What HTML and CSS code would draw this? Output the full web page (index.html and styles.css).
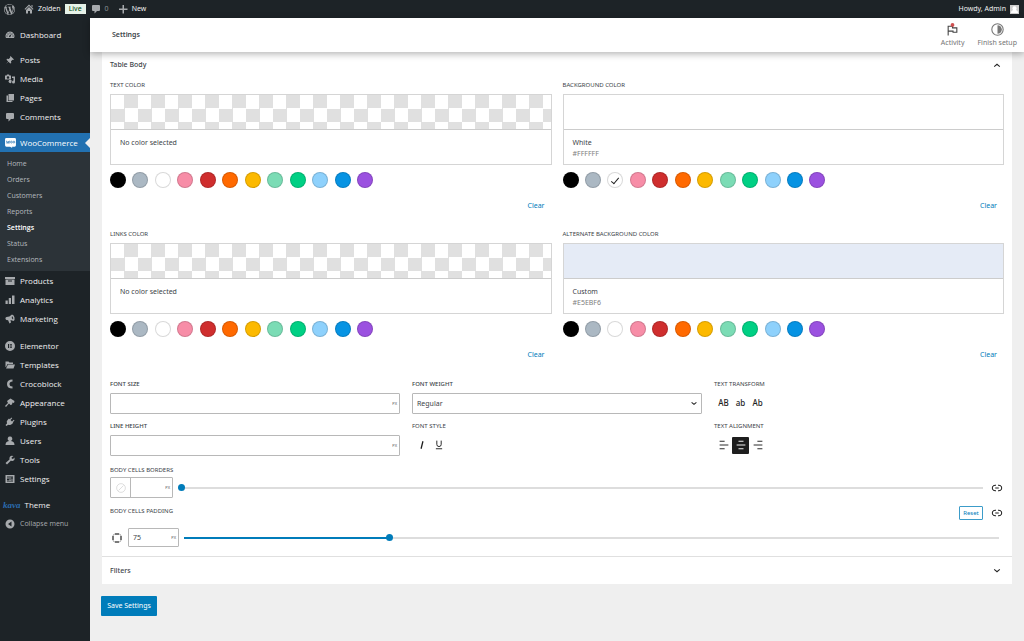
FILE: index.html
```html
<!DOCTYPE html>
<html lang="en">
<head>
<meta charset="utf-8">
<meta name="viewport" content="width=device-width, initial-scale=1">
<title>Settings</title>
<link rel="stylesheet" href="styles.css">
</head>
<body>
<header class="adminbar">
  <a class="bar-link wp-logo" href="#" aria-label="WordPress"><svg class="icon-lg" viewBox="0 0 20 20"><path fill-rule="evenodd" d="M20 10c0-5.510-4.490-10-10-10C4.480 0 0 4.490 0 10c0 5.520 4.480 10 10 10 5.510 0 10-4.480 10-10zM7.780 15.370L4.370 6.220c.55-.02 1.170-.08 1.170-.08.5-.06.44-1.130-.06-1.110 0 0-1.450.11-2.370.11-.18 0-.37 0-.58-.01C4.120 2.690 6.870 1.110 10 1.110c2.330 0 4.450.87 6.050 2.340-.68-.11-1.650.39-1.650 1.580 0 .74.45 1.360.9 2.100.35.61.55 1.360.55 2.460 0 1.490-1.400 5-1.400 5l-3.030-8.370c.54-.02.82-.17.82-.17.5-.05.44-1.250-.06-1.220 0 0-1.440.12-2.380.12-.87 0-2.330-.12-2.330-.12-.5-.03-.56 1.200-.06 1.220l.92.08 1.260 3.410zM17.410 10c.24-.64.74-1.870.43-4.250.7 1.290 1.050 2.710 1.050 4.250 0 3.290-1.730 6.240-4.400 7.780.97-2.590 1.940-5.200 2.920-7.780zM6.100 18.090C3.120 16.650 1.110 13.530 1.110 10c0-1.300.23-2.480.72-3.590C3.250 10.300 4.670 14.200 6.100 18.090zm4.030-6.630l2.580 6.980c-.86.29-1.760.45-2.710.45-.79 0-1.570-.11-2.290-.33.81-2.380 1.620-4.740 2.420-7.100z"/></svg></a>
  <a class="bar-link" href="#"><svg class="icon" viewBox="0 0 20 20"><path d="M10 1l9 9-1.500 1.500L10 4l-7.500 7.500L1 10zM15 2h2v5l-2-2zM10 6l6 6v7h-4v-5H8v5H4v-7z"/></svg><span>Zolden</span></a>
  <span class="live">Live</span>
  <a class="bar-link bar-comments" href="#"><svg class="icon" viewBox="0 0 20 20"><path d="M4 2h12q2 0 2 2v8q0 2-2 2h-4l-5 5v-5H4q-2 0-2-2V4q0-2 2-2z"/></svg><span class="dim">0</span></a>
  <a class="bar-link bar-new" href="#"><svg class="icon" viewBox="0 0 20 20"><path d="M9 2h3v7h7v3h-7v7H9v-7H2V9h7z"/></svg><span>New</span></a>
  <a class="bar-link account" href="#"><span>Howdy, Admin</span><svg class="avatar" viewBox="0 0 20 20"><path fill="#ccc" d="M0 0h20v20H0z"/><path fill="#fff" d="M10 3a4.500 4.500 0 0 1 3 8q5 1 5 7H2q0-6 5-7a4.500 4.500 0 0 1 3-8z"/></svg></a>
</header>
<div class="shell">
  <nav class="sidebar">
    <a class="item" href="#"><svg class="icon" viewBox="0 0 20 20"><path fill-rule="evenodd" d="M10 3a9 9 0 0 0-8 13h16A9 9 0 0 0 10 3zM9 5h2v2H9zM5 7h2v2H5zm8 0h2v2h-2zM3 11h2v2H3zm12 0h2v2h-2zm-6 0l4-3-2 5q0 2-2 1t0-3z"/></svg>Dashboard</a>
    <a class="item gap-sm" href="#"><svg class="icon" viewBox="0 0 20 20"><path d="M11 2l7 7-2 1-1-.5-3 3 .5 3.500-2 1-3.500-3.500L2 18l4.500-5L3 9.500l1-2 3.500.5 3-3-.5-1z"/></svg>Posts</a>
    <a class="item" href="#"><svg class="icon" viewBox="0 0 20 20"><path fill-rule="evenodd" d="M0 3h3l1-2h4l1 2h3v8H0zm6 1.500a2.500 2.500 0 1 0 0 5 2.500 2.500 0 0 0 0-5zM14 5h6v11a3 3 0 1 1-3-3V8h-3zM8 12h5v4a3 3 0 1 1-5-3z"/></svg>Media</a>
    <a class="item" href="#"><svg class="icon" viewBox="0 0 20 20"><path d="M7 2h11v13H7zM3 5h3v11h9v2H3z"/></svg>Pages</a>
    <a class="item" href="#"><svg class="icon" viewBox="0 0 20 20"><path d="M4 2h12q2 0 2 2v8q0 2-2 2h-4l-5 5v-5H4q-2 0-2-2V4q0-2 2-2z"/></svg>Comments</a>
    <a class="item active gap-md" href="#"><svg class="icon woo" viewBox="0 0 24 22"><path fill="#fff" d="M3 0h18q3 0 3 3v13q0 3-3 3h-6l1 3-5-3H3q-3 0-3-3V3q0-3 3-3z"/><path fill="none" stroke="#2271b1" stroke-width="1.500" d="M3 6l1.500 6L7 7l1.500 5L10 6"/><circle cx="14" cy="9" r="2" fill="none" stroke="#2271b1" stroke-width="1.500"/><circle cx="19.500" cy="9" r="2" fill="none" stroke="#2271b1" stroke-width="1.500"/></svg>WooCommerce</a>
    <div class="submenu">
      <a href="#">Home</a><a href="#">Orders</a><a href="#">Customers</a><a href="#">Reports</a><a class="current" href="#">Settings</a><a href="#">Status</a><a href="#">Extensions</a>
    </div>
    <a class="item" href="#"><svg class="icon" viewBox="0 0 20 20"><path fill-rule="evenodd" d="M0 2h20v4H0zm1 5h18v11H1zm5 2v2h8V9z"/></svg>Products</a>
    <a class="item" href="#"><svg class="icon" viewBox="0 0 20 20"><path d="M14 1h5v17h-5zM7.500 6h4.500v12H7.500zM1 11h4.500v7H1z"/></svg>Analytics</a>
    <a class="item" href="#"><svg class="icon" viewBox="0 0 20 20"><path fill-rule="evenodd" d="M14 1q4 1 5 6t-2 7l-6-2 1 5-3 2-3-7q-4 1-5-2t2-4q6 0 11-5zm0 3q-2 4 2 7 2-3-2-7z"/></svg>Marketing</a>
    <a class="item gap-lg" href="#"><svg class="icon" viewBox="0 0 20 20"><path fill-rule="evenodd" d="M10 0a10 10 0 1 1 0 20 10 10 0 0 1 0-20zM6 6v8h2V6zm3.500 0v1.600H14V6zm0 3.200v1.600H14V9.200zm0 3.200V14H14v-1.600z"/></svg>Elementor</a>
    <a class="item" href="#"><svg class="icon" viewBox="0 0 20 20"><path d="M1 3h6l2 2h7v3H5l-3 6H1zm5 6h14l-3 8H2z"/></svg>Templates</a>
    <a class="item" href="#"><svg class="icon" viewBox="0 0 20 20"><path d="M15 1v4q-6 0-6 5t6 5v4Q4 19 4 10t11-9z"/></svg>Crocoblock</a>
    <a class="item" href="#"><svg class="icon" viewBox="0 0 20 20"><path d="M8 3l3-2 8 5-1 4-3-1-1 4-3 1-3-3-6 7-2-2 6-6-2-4z"/></svg>Appearance</a>
    <a class="item" href="#"><svg class="icon" viewBox="0 0 20 20"><path d="M13 1l1.500 1.500L11 6l3 3 3.500-3.500L19 7l-3.500 3.500 1 1-2 2q-4 4-8 2L3 18l-2-2 3-3q-2-5 2-8l2-2 1.500 1.500z"/></svg>Plugins</a>
    <a class="item" href="#"><svg class="icon" viewBox="0 0 20 20"><path d="M10 1a4.500 4.500 0 0 1 3 8l-1 1q7 1 7 8H1q0-7 7-8L7 9a4.500 4.500 0 0 1 3-8z"/></svg>Users</a>
    <a class="item" href="#"><svg class="icon" viewBox="0 0 20 20"><path d="M17 2l-4 3 .5 2L16 8l3-3q1 6-4 7-2 0-3-1l-8 8-3-3 8-7q-1-6 4-7.500z"/></svg>Tools</a>
    <a class="item" href="#"><svg class="icon" viewBox="0 0 20 20"><path fill-rule="evenodd" d="M1 2h18v16H1zm4 2v6H4v2h1v4h2v-4h1v-2H7V4zm4 0v8h2V4zm0 9v3h2v-3zm4-9v3h-1v2h1v7h2V9h1V7h-1V4z"/></svg>Settings</a>
    <a class="item theme gap-md" href="#"><span class="kava">kava</span>Theme</a>
    <button class="item collapse" type="button"><svg class="icon" viewBox="0 0 20 20"><path fill-rule="evenodd" d="M10 1a9 9 0 1 1 0 18 9 9 0 0 1 0-18zm3 4l-7 5 7 5z"/></svg>Collapse menu</button>
  </nav>
  <main class="main">
    <div class="topbar">
      <h1>Settings</h1>
      <button class="tab" type="button"><svg viewBox="0 0 24 24"><path fill="none" stroke="#444" stroke-width="2" d="M4 23V6h8v3h8v8h-7v-2H4"/><circle cx="12" cy="3.500" r="3.500" fill="#d05050"/></svg>Activity</button>
      <button class="tab" type="button"><svg viewBox="0 0 24 24"><circle cx="12" cy="12" r="10.500" fill="none" stroke="#777" stroke-width="2"/><path fill="#777" d="M12 4a8 8 0 0 1 0 16z"/></svg>Finish setup</button>
    </div>
    <form class="content">
      <div class="card">
        <button class="panel-head" type="button">Table Body<svg class="chev" viewBox="0 0 10 6"><path d="M1.500 4.500L5 1.500l3.500 3"/></svg></button>
        <div class="panel">
          <div class="two">
            <fieldset class="color">
              <legend>TEXT COLOR</legend>
              <button class="picker" type="button"><span class="preview checker"></span><span class="info"><span>No color selected</span></span></button>
              <div class="swatches">
                <input type="radio" name="text" class="black" aria-label="Black"><input type="radio" name="text" class="gray" aria-label="Gray"><input type="radio" name="text" class="white" aria-label="White"><input type="radio" name="text" class="pink" aria-label="Pink"><input type="radio" name="text" class="red" aria-label="Red"><input type="radio" name="text" class="orange" aria-label="Orange"><input type="radio" name="text" class="amber" aria-label="Amber"><input type="radio" name="text" class="mint" aria-label="Mint"><input type="radio" name="text" class="green" aria-label="Green"><input type="radio" name="text" class="sky" aria-label="Sky"><input type="radio" name="text" class="blue" aria-label="Blue"><input type="radio" name="text" class="purple" aria-label="Purple">
              </div>
              <button class="clear" type="button">Clear</button>
            </fieldset>
            <fieldset class="color">
              <legend>BACKGROUND COLOR</legend>
              <button class="picker" type="button"><span class="preview white"></span><span class="info"><span>White</span><span class="hex">#FFFFFF</span></span></button>
              <div class="swatches">
                <input type="radio" name="bg" class="black" aria-label="Black"><input type="radio" name="bg" class="gray" aria-label="Gray"><input type="radio" name="bg" class="white" aria-label="White" checked><input type="radio" name="bg" class="pink" aria-label="Pink"><input type="radio" name="bg" class="red" aria-label="Red"><input type="radio" name="bg" class="orange" aria-label="Orange"><input type="radio" name="bg" class="amber" aria-label="Amber"><input type="radio" name="bg" class="mint" aria-label="Mint"><input type="radio" name="bg" class="green" aria-label="Green"><input type="radio" name="bg" class="sky" aria-label="Sky"><input type="radio" name="bg" class="blue" aria-label="Blue"><input type="radio" name="bg" class="purple" aria-label="Purple">
              </div>
              <button class="clear" type="button">Clear</button>
            </fieldset>
            <fieldset class="color">
              <legend>LINKS COLOR</legend>
              <button class="picker" type="button"><span class="preview checker"></span><span class="info"><span>No color selected</span></span></button>
              <div class="swatches">
                <input type="radio" name="links" class="black" aria-label="Black"><input type="radio" name="links" class="gray" aria-label="Gray"><input type="radio" name="links" class="white" aria-label="White"><input type="radio" name="links" class="pink" aria-label="Pink"><input type="radio" name="links" class="red" aria-label="Red"><input type="radio" name="links" class="orange" aria-label="Orange"><input type="radio" name="links" class="amber" aria-label="Amber"><input type="radio" name="links" class="mint" aria-label="Mint"><input type="radio" name="links" class="green" aria-label="Green"><input type="radio" name="links" class="sky" aria-label="Sky"><input type="radio" name="links" class="blue" aria-label="Blue"><input type="radio" name="links" class="purple" aria-label="Purple">
              </div>
              <button class="clear" type="button">Clear</button>
            </fieldset>
            <fieldset class="color">
              <legend>ALTERNATE BACKGROUND COLOR</legend>
              <button class="picker" type="button"><span class="preview custom"></span><span class="info"><span>Custom</span><span class="hex">#E5EBF6</span></span></button>
              <div class="swatches">
                <input type="radio" name="alt" class="black" aria-label="Black"><input type="radio" name="alt" class="gray" aria-label="Gray"><input type="radio" name="alt" class="white" aria-label="White"><input type="radio" name="alt" class="pink" aria-label="Pink"><input type="radio" name="alt" class="red" aria-label="Red"><input type="radio" name="alt" class="orange" aria-label="Orange"><input type="radio" name="alt" class="amber" aria-label="Amber"><input type="radio" name="alt" class="mint" aria-label="Mint"><input type="radio" name="alt" class="green" aria-label="Green"><input type="radio" name="alt" class="sky" aria-label="Sky"><input type="radio" name="alt" class="blue" aria-label="Blue"><input type="radio" name="alt" class="purple" aria-label="Purple">
              </div>
              <button class="clear" type="button">Clear</button>
            </fieldset>
          </div>
          <div class="three">
            <div class="field"><label class="strong" for="size">FONT SIZE</label><div class="box"><input id="size" type="text"><span class="unit">PX</span></div></div>
            <div class="field"><label class="strong" for="weight">FONT WEIGHT</label><div class="box select"><select id="weight"><option>Regular</option></select><svg class="chev" viewBox="0 0 10 6"><path d="M2 1.500L5 4l3-2.500"/></svg></div></div>
            <div class="field"><span class="label">TEXT TRANSFORM</span><div class="tools"><button type="button">AB</button><button type="button">ab</button><button type="button">Ab</button></div></div>
            <div class="field"><label class="strong" for="line">LINE HEIGHT</label><div class="box"><input id="line" type="text"><span class="unit">PX</span></div></div>
            <div class="field"><span class="label">FONT STYLE</span><div class="tools"><button type="button" aria-label="Italic"><svg viewBox="0 0 16 16"><path stroke-width="2" d="M9.500 2l-3 12"/></svg></button><button type="button" aria-label="Underline"><svg viewBox="0 0 16 16"><path d="M4.500 1v6q0 3.500 3.500 3.500t3.500-3.500V1M3 14h10"/></svg></button></div></div>
            <div class="field"><span class="label">TEXT ALIGNMENT</span><div class="tools"><button type="button" aria-label="Align left"><svg viewBox="0 0 16 16"><path d="M1 2h8M1 8h14M1 14h8"/></svg></button><button class="on" type="button" aria-label="Align center"><svg viewBox="0 0 16 16"><path d="M4 2h8M1 8h14M4 14h8"/></svg></button><button type="button" aria-label="Align right"><svg viewBox="0 0 16 16"><path d="M7 2h8M1 8h14M7 14h8"/></svg></button></div></div>
          </div>
          <label class="label" for="border">BODY CELLS BORDERS</label>
          <div class="row border-row">
            <div class="box small"><button class="style" type="button" aria-label="Border color and style"><svg viewBox="0 0 16 16"><circle cx="8" cy="8" r="7"/><path d="M4 12l8-8"/></svg></button><input id="border" type="text"><span class="unit">PX</span></div>
            <input class="range" type="range" min="0" max="100" value="0" aria-label="Border width">
            <button class="link" type="button" aria-label="Unlink borders"><svg viewBox="0 0 24 24"><path d="M10 6.500H8a5.500 5.500 0 0 0 0 11h2M14 6.500h2a5.500 5.500 0 0 1 0 11h-2M8.500 12h7"/></svg></button>
          </div>
          <div class="row pad-head">
            <label class="label grow" for="padding">BODY CELLS PADDING</label>
            <button class="reset" type="button">Reset</button>
            <button class="link" type="button" aria-label="Unlink sides"><svg viewBox="0 0 24 24"><path d="M10 6.500H8a5.500 5.500 0 0 0 0 11h2M14 6.500h2a5.500 5.500 0 0 1 0 11h-2M8.500 12h7"/></svg></button>
          </div>
          <div class="row pad-row">
            <svg class="sides" viewBox="0 0 20 20"><rect class="faint" x="2" y="2" width="16" height="16" rx="4"/><path d="M6 2h8M6 18h8M2 6v8M18 6v8"/></svg>
            <div class="box tiny"><input id="padding" type="text" value="75"><span class="unit">PX</span></div>
            <input class="range filled" type="range" min="0" max="300" value="75" aria-label="Padding">
          </div>
        </div>
        <button class="panel-head filters" type="button">Filters<svg class="chev" viewBox="0 0 10 6"><path d="M1.500 1.500l3.500 3 3.500-3"/></svg></button>
      </div>
      <button class="save" type="button">Save Settings</button>
    </form>
  </main>
</div>
</body>
</html>
```

FILE: styles.css
```css
* { box-sizing: border-box; }
body {
  margin: 0;
  min-height: 100vh;
  display: flex;
  flex-direction: column;
  background: #efefef;
  color: #3c4348;
  font: 7px/10px "Noto Sans", "Open Sans", sans-serif;
}
button, input, select {
  font: inherit;
  color: inherit;
  margin: 0;
  padding: 0;
  border: 0;
  background: none;
}
a { color: inherit; text-decoration: none; }
svg { display: block; flex: none; }
.icon { width: 10px; height: 10px; fill: #a7aaad; }
.icon-lg { width: 11px; height: 11px; fill: #a7aaad; }

.adminbar {
  display: flex;
  align-items: center;
  height: 18px;
  padding: 0 5px 0 4px;
  background: #1d2327;
  color: #f0f0f1;
}
.bar-link { display: flex; align-items: center; gap: 4px; }
.wp-logo { margin-right: 9px; }
.live {
  margin: 0 5px 0 4px;
  padding: 0 4px;
  background: #e6f2e8;
  color: #00450c;
}
.dim { color: #8c9196; }
.bar-new { margin-left: 9px; }
.account { margin-left: auto; }
.avatar { width: 9px; height: 9px; }

.shell { display: flex; flex: 1; }
.sidebar {
  display: flex;
  flex-direction: column;
  flex: none;
  width: 90px;
  padding-top: 7px;
  background: #1d2327;
  color: #f0f0f1;
  font-family: "Open Sans", "Noto Sans", sans-serif;
}
.item {
  display: flex;
  align-items: center;
  gap: 5px;
  height: 19px;
  padding-left: 5px;
  font-size: 8px;
  text-align: left;
}
.gap-sm { margin-top: 6px; }
.gap-md { margin-top: 7px; }
.gap-lg { margin-top: 8px; }
.active { position: relative; background: #2271b1; color: #fff; }
.active::after {
  content: "";
  position: absolute;
  right: 0;
  top: 5px;
  border: 5px solid transparent;
  border-right-color: #efefef;
  border-left-width: 0;
}
.woo { width: 11px; margin-right: -1px; }
.submenu {
  display: flex;
  flex-direction: column;
  padding: 4px 0 3px 7px;
  background: #2c3338;
  color: #b4b9be;
  line-height: 16px;
}
.current { color: #fff; font-weight: 600; }
.theme { padding-left: 3px; gap: 4px; }
.kava { color: #2b6cb0; font: italic bold 9px/10px "Liberation Serif", serif; }
.collapse { color: #a7aaad; font-size: 7px; }

.main { flex: 1; min-width: 0; }
.topbar {
  position: relative;
  display: flex;
  align-items: center;
  gap: 13px;
  height: 34px;
  padding: 0 7px 0 22px;
  background: #fff;
  box-shadow: 0 2px 7px rgba(0, 0, 0, .3);
}
.topbar h1 { margin: 0 auto 0 0; font-size: 7px; font-weight: 600; }
.tab {
  display: flex;
  flex-direction: column;
  align-items: center;
  gap: 2px;
  color: #757575;
}
.tab svg { width: 13px; height: 13px; }

.content { margin: 0; padding: 0 12px 0 11px; }
.card { margin-left: 1px; background: #fff; }
.panel-head {
  display: flex;
  align-items: center;
  justify-content: space-between;
  width: 100%;
  height: 26px;
  padding: 0 11px 0 8px;
  font-weight: 500;
}
.filters { height: 28px; border-top: 1px solid #e0e0e0; }
.chev { width: 8px; height: 5px; fill: none; stroke: #222; stroke-width: 1.3; }
.panel { padding: 2px 8px 9px; }
.two { display: grid; grid-template-columns: 1fr 1fr; column-gap: 11px; }
.color {
  display: flex;
  flex-direction: column;
  min-width: 0;
  height: 149px;
  margin: 0;
  padding: 0;
  border: 0;
}
.color legend, .label { padding: 0; font-size: 6px; line-height: 10px; }
.strong { font-size: 6px; line-height: 10px; font-weight: 500; }
.picker {
  display: flex;
  flex-direction: column;
  height: 71px;
  margin-top: 4px;
  border: 1px solid #d5d5d5;
  text-align: left;
}
.preview { flex: none; height: 35px; border-bottom: 1px solid #ccc; width: 100%; }
.info { display: flex; flex-direction: column; gap: 1px; padding: 8px 9px; }
.hex { color: #808080; }
.checker { background: repeating-conic-gradient(#e0e0e0 0 25%, #fff 0 50%) 0 0 / 27px 27px; }
.swatches {
  display: flex;
  justify-content: space-between;
  width: 263px;
  max-width: 100%;
  margin-top: 7px;
}
.swatches input {
  appearance: none;
  display: grid;
  place-items: center;
  width: 16px;
  height: 16px;
  border: 1px solid rgba(0, 0, 0, .15);
  border-radius: 50%;
}
.swatches input:checked::after {
  content: "";
  width: 3px;
  height: 7px;
  border: solid #222;
  border-width: 0 1px 1px 0;
  transform: rotate(40deg);
}
.black { background: #000; }
.gray { background: #abb8c3; }
.white { background: #fff; }
.pink { background: #f78da7; }
.red { background: #cf2e2e; }
.orange { background: #ff6900; }
.amber { background: #fcb900; }
.mint { background: #7bdcb5; }
.green { background: #00d084; }
.sky { background: #8ed1fc; }
.blue { background: #0693e3; }
.purple { background: #9b51e0; }
.custom { background: #e5ebf6; }
.clear { align-self: flex-end; margin: 13px 7px 0; color: #007cba; }

.three {
  display: grid;
  grid-template-columns: 1fr 1fr 1fr;
  gap: 7px 12px;
  margin-top: 1px;
}
.field { display: flex; flex-direction: column; gap: 4px; }
.box {
  display: flex;
  align-items: center;
  height: 21px;
  border: 1px solid #b8b8b8;
  border-radius: 1px;
  background: #fff;
}
.box input { flex: 1; min-width: 0; align-self: stretch; padding-left: 4px; }
.unit { padding-right: 2px; font-size: 4px; color: #555; }
.select { padding-right: 3px; }
.select select { flex: 1; appearance: none; padding-left: 4px; }
.tools { display: flex; align-items: center; height: 20px; }
.tools button {
  display: grid;
  place-items: center;
  width: 17px;
  height: 17px;
  margin-left: 1px;
  border-radius: 1px;
  font-size: 8px;
  font-weight: 500;
  color: #1e1e1e;
}
.tools button + button { margin-left: 0; }
.tools svg { width: 10px; height: 10px; fill: none; stroke: currentColor; stroke-width: 1.5; }
.tools .on { background: #1e1e1e; color: #fff; }

.three + .label { display: block; margin-top: 9px; }
.row { display: flex; align-items: center; }
.border-row { margin-top: 2px; }
.row .box { margin-right: 5px; }
.small { width: 63px; }
.style { display: grid; place-items: center; width: 20px; align-self: stretch; border-right: 1px solid #b8b8b8; }
.style svg { width: 10px; height: 10px; fill: none; stroke: #ccc; }
.range {
  appearance: none;
  flex: 1;
  min-width: 0;
  height: 7px;
  background: linear-gradient(#ddd, #ddd) center / 100% 2px no-repeat;
}
.range::-webkit-slider-thumb {
  appearance: none;
  width: 7px;
  height: 7px;
  border-radius: 50%;
  background: #007cba;
}
.filled { background: linear-gradient(90deg, #007cba 25%, #ddd 25%) center / 100% 2px no-repeat; }
.link { margin: 0 1px 0 8px; }
.link svg { width: 12px; height: 12px; fill: none; stroke: #1e1e1e; stroke-width: 2; }
.pad-head { margin-top: 8px; align-items: flex-start; }
.grow { flex: 1; }
.reset {
  width: 24px;
  height: 14px;
  border: 1px solid #3c9cc9;
  border-radius: 1px;
  color: #007cba;
  font-size: 6px;
}
.pad-head .link { margin-top: 1px; }
.pad-row { margin-top: 8px; padding-right: 5px; }
.sides { width: 10px; height: 10px; margin: 0 6px 0 2px; fill: none; stroke: #1e1e1e; stroke-width: 2; }
.faint { stroke: #aaa; }
.pad-row .box { width: 51px; height: 19px; }

.save {
  margin: 12px 0;
  width: 56px;
  height: 20px;
  border-radius: 1px;
  background: #007cba;
  color: #fff;
}
```
